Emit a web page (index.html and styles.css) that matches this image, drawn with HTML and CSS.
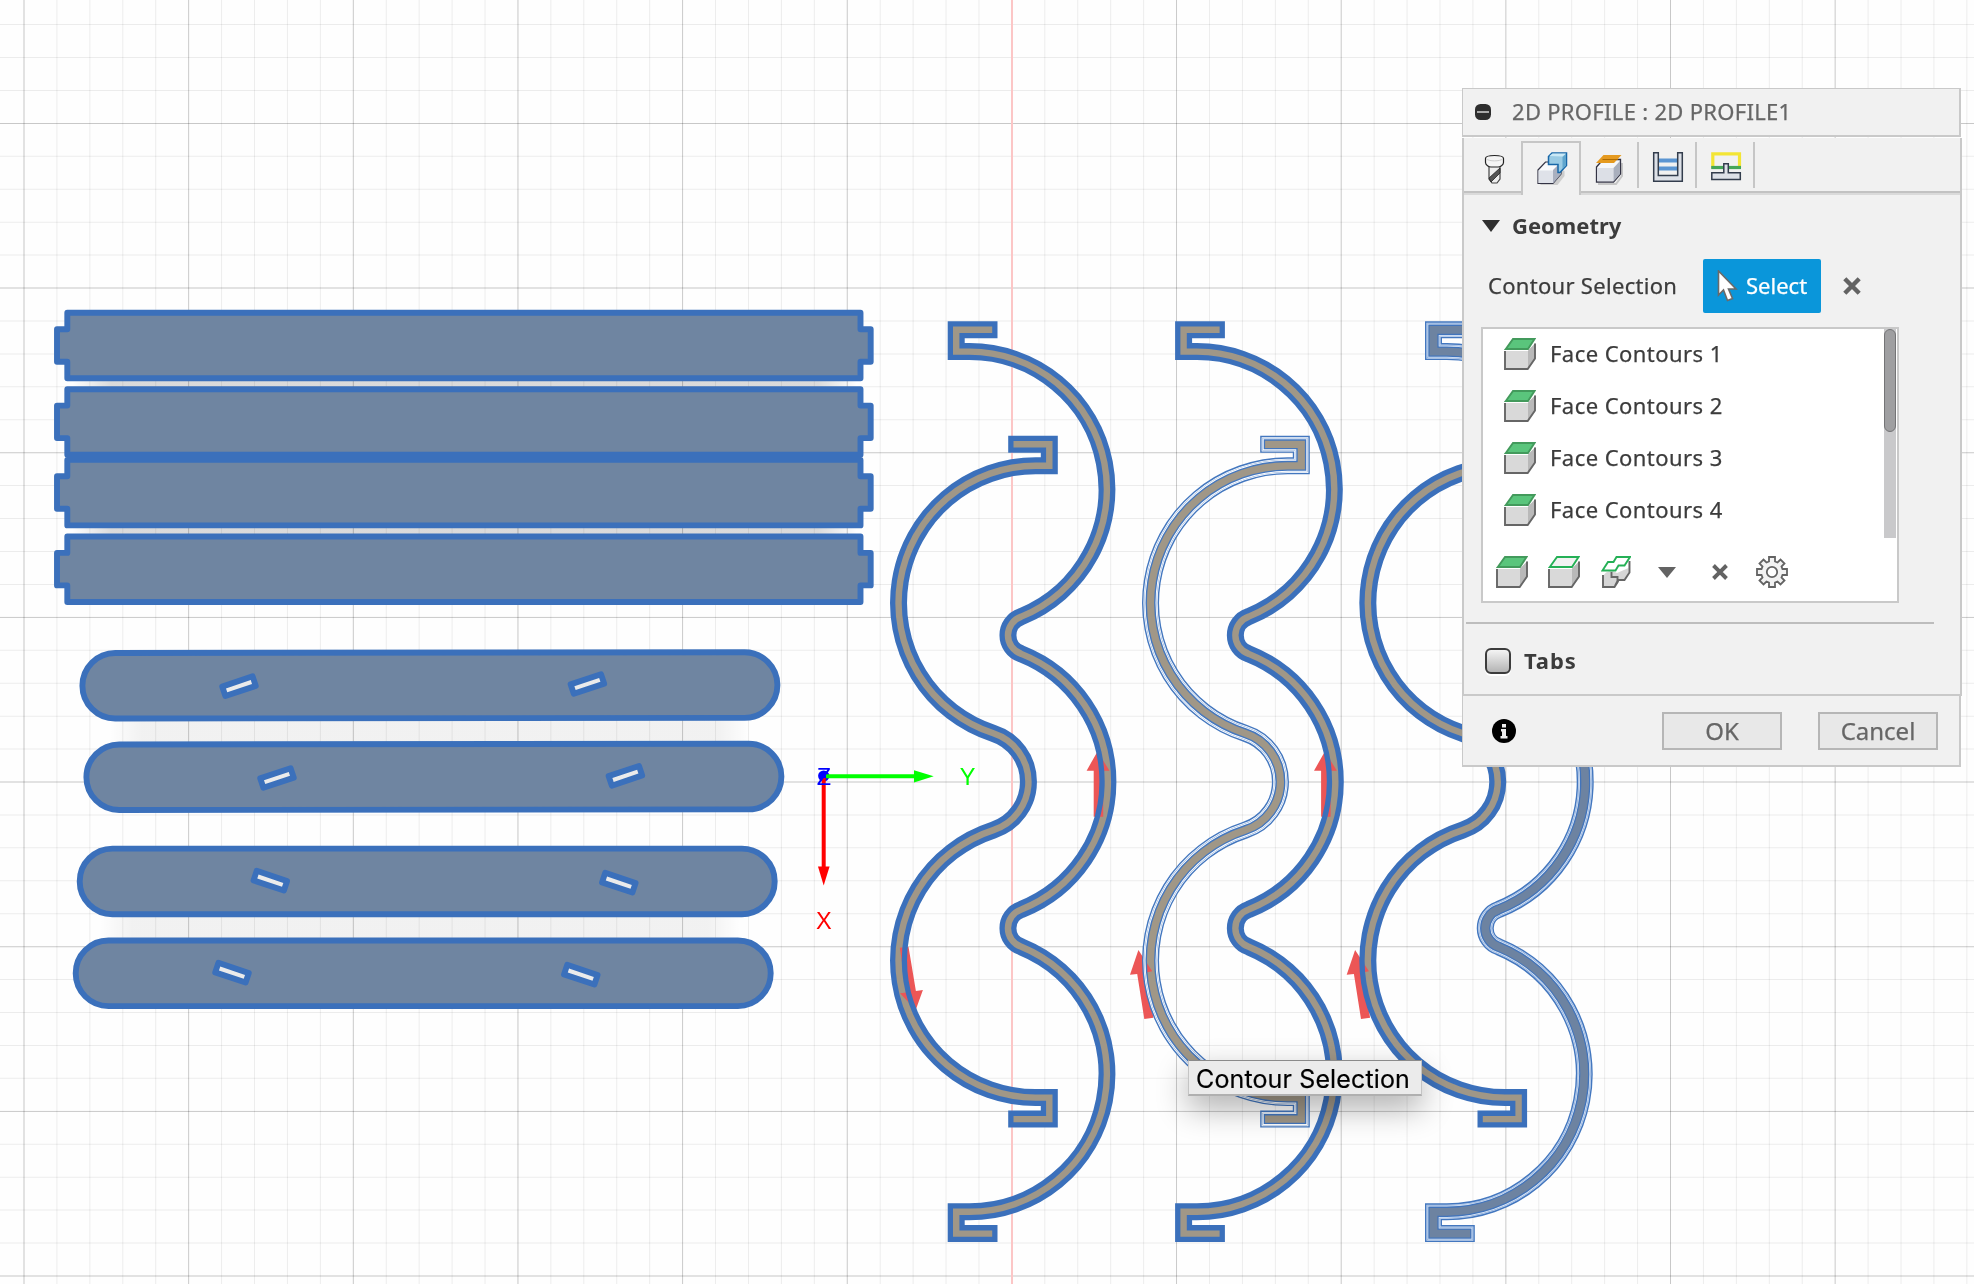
FILE: index.html
```html
<!DOCTYPE html>
<html lang="en">
<head>
<meta charset="utf-8">
<title>2D Profile</title>
<link rel="stylesheet" href="styles.css">
</head>
<body>
<main class="viewport">
<svg class="canvas" width="1974" height="1284" viewBox="0 0 1974 1284">
  <defs>
    <path id="brace-r" d="M989 329.8H956.2V351.6H969.5A137.6 137.6 0 0 1 1021.3 616.6A19.7 19.7 0 0 0 1021.3 653.9A137.6 137.6 0 0 1 1021.3 909.5A19.7 19.7 0 0 0 1021.3 946.8A137.6 137.6 0 0 1 969.5 1211.8H956.2V1233.6H989"/>
    <path id="brace-l" d="M1016.7 444.3H1049.3V465.8H1036A137.1 137.1 0 0 0 993.3 733.3A50.9 50.9 0 0 1 993.3 830.1A137.1 137.1 0 0 0 1036 1097.6H1049.3V1119.1H1016.7"/>
    <path id="plank" d="M67.3 0H860.5V16.4H870.7V48.9H860.5V65.5H67.3V48.9H57V16.4H67.3Z"/>
    <rect id="slat" width="695" height="65.6" rx="32.8"/>
    <rect id="slot" x="-16" y="-5" width="32" height="10"/>
    <g id="arrow"><path d="M1097.5 751.5L1109.5 770.7H1103.2V816.7H1093.7V770.7H1086.6Z"/></g>
    <g id="arrow-l"><path d="M1138.4 950L1152.2 971.3L1146 972.5L1153.4 1017.7L1144.3 1019L1137.2 974L1130 974.7Z"/></g>
    <mask id="core" maskUnits="userSpaceOnUse" x="860" y="280" width="760" height="1004">
      <rect x="860" y="280" width="760" height="1004" fill="#fff"/>
      <g class="brace" stroke="#000" stroke-width="6.4">
        <use href="#brace-r"/><use href="#brace-r" x="227.4"/><use href="#brace-l"/><use href="#brace-l" x="469.3"/>
      </g>
    </mask>
    <mask id="core-thin" maskUnits="userSpaceOnUse" x="860" y="280" width="760" height="1004">
      <rect x="860" y="280" width="760" height="1004" fill="#fff"/>
      <use class="brace" href="#brace-l" x="252" stroke="#000" stroke-width="7.2"/>
    </mask>
    <linearGradient id="shade" x1="0" x2="1"><stop offset="0" stop-color="#000" stop-opacity="0"/><stop offset=".05" stop-color="#000"/><stop offset=".95" stop-color="#000"/><stop offset="1" stop-color="#000" stop-opacity="0"/></linearGradient>
  </defs>

  <g fill="none" stroke="#000">
    <path d="M23.5 642H1974" stroke-opacity=".07" stroke-width="1284" stroke-dasharray="1 31.93"/>
    <path d="M987 24.1V1284" stroke-opacity=".07" stroke-width="1974" stroke-dasharray="1 31.93"/>
    <path d="M23.5 642H1974" stroke-opacity=".15" stroke-width="1284" stroke-dasharray="1 163.65"/>
    <path d="M987 122.9V1284" stroke-opacity=".15" stroke-width="1974" stroke-dasharray="1 163.67"/>
  </g>
  <path d="M1012 0V1284" stroke="#fcc6c6" stroke-width="2"/>

  <g fill="url(#shade)">
    <rect x="72" y="376" width="785" height="14" opacity=".14"/>
    <rect x="72" y="523" width="785" height="14" opacity=".14"/>
    <rect x="110" y="715" width="640" height="30" opacity=".05"/>
    <rect x="100" y="912" width="640" height="30" opacity=".05"/>
  </g>

  <g class="part">
    <use href="#plank" y="312.8"/><use href="#plank" y="389.2"/><use href="#plank" y="459.9"/><use href="#plank" y="536.5"/>
    <use href="#slat" x="82.4" y="652.6" transform="rotate(-.06 430 685)"/>
    <use href="#slat" x="86.4" y="744.1" transform="rotate(-.06 430 777)"/>
    <use href="#slat" x="79.7" y="848.6"/>
    <use href="#slat" x="75.7" y="940.5"/>
  </g>
  <g class="slots">
    <use href="#slot" transform="translate(239 686.2) rotate(-18.5)"/>
    <use href="#slot" transform="translate(587.4 684) rotate(-18.5)"/>
    <use href="#slot" transform="translate(277 778) rotate(-18.5)"/>
    <use href="#slot" transform="translate(625.4 775.8) rotate(-18.5)"/>
    <use href="#slot" transform="translate(270.3 880.7) rotate(18.5)"/>
    <use href="#slot" transform="translate(618.8 882.7) rotate(18.5)"/>
    <use href="#slot" transform="translate(232 972.7) rotate(18.5)"/>
    <use href="#slot" transform="translate(580.8 974.7) rotate(18.5)"/>
  </g>

  <g class="brace" stroke="#a09787" stroke-width="9">
    <use href="#brace-r"/><use href="#brace-r" x="227.4"/><use href="#brace-l"/><use href="#brace-l" x="252"/><use href="#brace-l" x="469.3"/>
  </g>
  <g fill="#ec5656">
    <use href="#arrow"/><use href="#arrow" x="227.4"/>
    <path d="M899.8 947.7L908.5 946.7L915.9 990.9L922.9 990L915.7 1010L900 993.3L906.5 992.5Z"/>
    <use href="#arrow-l"/><use href="#arrow-l" x="216.7"/>
  </g>
  <g mask="url(#core)" class="brace" stroke="#3b70bb" stroke-width="17">
    <use href="#brace-r"/><use href="#brace-r" x="227.4"/><use href="#brace-l"/><use href="#brace-l" x="469.3"/>
  </g>
  <g mask="url(#core-thin)" class="brace">
    <use href="#brace-l" x="252" stroke="#4377bf" stroke-width="17"/>
    <use href="#brace-l" x="252" stroke="#fff" stroke-width="14.2"/>
    <use href="#brace-l" x="252" stroke="#8fb0de" stroke-width="12.7"/>
    <use href="#brace-l" x="252" stroke="#fff" stroke-width="11.7"/>
    <use href="#brace-l" x="252" stroke="#4377bf" stroke-width="10"/>
  </g>
  <g class="brace">
    <use href="#brace-r" x="477.3" stroke="#4377bf" stroke-width="17"/>
    <use href="#brace-r" x="477.3" stroke="#c9d9f0" stroke-width="14.2"/>
    <use href="#brace-r" x="477.3" stroke="#7fa4d8" stroke-width="12.8"/>
    <use href="#brace-r" x="477.3" stroke="#e4edf8" stroke-width="11.8"/>
    <use href="#brace-r" x="477.3" stroke="#4174bc" stroke-width="10.4"/>
    <use href="#brace-r" x="477.3" stroke="#6d83a1" stroke-width="7.8"/>
  </g>

  <g class="axes">
    <circle cx="823.7" cy="776" r="5.6" fill="#00f"/>
    <path d="M823.7 778V867" stroke="#f00" stroke-width="4"/><path d="M818 866.5H829.6L823.7 885.5Z" fill="#f00"/>
    <path d="M826 776.3H915" stroke="#0f0" stroke-width="4"/><path d="M914 770.3V782.5L933.7 776.3Z" fill="#0f0"/>
    <text x="967.7" y="784.5" fill="#0f0">Y</text>
    <text x="823.9" y="928.5" fill="#f00">X</text>
    <text x="823.9" y="784.5" fill="#00f">Z</text>
  </g>
</svg>

<div class="tooltip">Contour Selection</div>

<section class="dialog">
  <header class="titlebar">
    <svg width="16" height="16" viewBox="0 0 16 16"><rect width="16" height="16" rx="5.5" fill="#2e2e2e"/><path d="M2 8H14" stroke="#aaa" stroke-width="2"/></svg>
    <h1>2D PROFILE : 2D PROFILE1</h1>
  </header>
  <div class="body">
    <nav class="tabs">
      <span class="tab first"><svg width="57" height="50" viewBox="0 0 57 50">
        <path d="M25 24H36V38L33 42H28L25 38Z" fill="#eee" stroke="#444" stroke-width="1.2"/>
        <path d="M25 37L36 27V32L27 41Z" fill="#555" stroke="#222" stroke-width=".8"/>
        <path d="M21.500 17.500C21.500 13.500 39.500 13.500 39.500 17.500V21.500C39.500 24 36 26 34 26H27C25 26 21.500 24 21.500 21.500Z" fill="#f4f4f4" stroke="#222" stroke-width="1.2"/><path d="M22.500 18C25 20.500 36 20.500 38.500 18" fill="none" stroke="#ccc"/></svg></span>
      <span class="tab active"><svg width="56" height="50" viewBox="0 0 56 50">
        <path d="M16 42H33L40 33V28L24 20L16 28Z" fill="#aaa" opacity=".5" transform="translate(1.500 1)"/>
        <path d="M15 28L22.500 20H38V32L30 41.500H15Z" fill="#fafbfd" stroke="#334" stroke-width="1.2"/>
        <path d="M15.500 28.500H30V41H15.500Z" fill="#dfe2e9"/><path d="M30 28L38 20V32L30 41.500Z" fill="#aab0bf"/>
        <path d="M25.500 14.500L29 11H43.500V23.500L37 30.500H35V22.500H25.500Z" fill="#9acbe4" stroke="#1867a8" stroke-width="1.5"/>
        <path d="M26.500 14L29.500 11.500H43L39.500 14.500Z" fill="#cbe9f6"/><path d="M39.500 15V27L43 23.500V12Z" fill="#5fa5cd"/></svg></span>
      <span class="tab"><svg width="56" height="50" viewBox="0 0 56 50">
        <path d="M17 43H35L41 35V22" fill="none" stroke="#aaa" stroke-width="2" opacity=".6"/>
        <path d="M15.500 26L22 18.500H39.500V33L32.500 41H15.500Z" fill="#f6f7fa" stroke="#334" stroke-width="1.3"/>
        <path d="M16.200 27H32.500V40.300H16.200Z" fill="#dcdfe6"/><path d="M32.500 27L39 20V33L32.500 40.500Z" fill="#a9afbd"/>
        <path d="M15 22L22.500 14H40.500L33 22Z" fill="#e59a20"/><path d="M21.500 18.500H37" stroke="#b06c00" stroke-width="1"/></svg></span>
      <span class="tab"><svg width="56" height="50" viewBox="0 0 56 50">
        <path d="M19 17.500H38V21.500H19ZM19 25.500H38V29.500H19Z" fill="#5b95d2"/>
        <path d="M14.700 11.700H19.300V34.600H38.700V11.700H43.300V40.300H14.700Z" fill="#dde1e8" stroke="#333d4d" stroke-width="1.500"/></svg></span>
      <span class="tab"><svg width="56" height="50" viewBox="0 0 56 50">
        <path d="M15.800 27V12.800H42.500V27" fill="none" stroke="#f3e535" stroke-width="3.200"/><path d="M14.200 26.500H44" stroke="#45a659" stroke-width="3.200"/>
        <path d="M14.800 31.800H26.800V22.800H31.300V31.800H43.300V38.500H14.800Z" fill="#dde1e8" stroke="#333d4d" stroke-width="1.500"/></svg></span>
    </nav>

    <div class="group-head"><svg width="18" height="12" viewBox="0 0 18 12"><path d="M0 0H18L9 12Z" fill="#2f2f2f"/></svg><h2>Geometry</h2></div>

    <div class="field">
      <label>Contour Selection</label>
      <button class="select"><svg width="21" height="33" viewBox="0 0 21 33"><path d="M1.500 1V25L6.500 20L10.500 30.500L15.500 28.500L11.500 19H19Z" fill="#fff" stroke="#6a6a6a" stroke-width="1.600"/></svg><span>Select</span></button>
      <svg class="clear" width="18" height="18" viewBox="0 0 18 18"><path d="M1.800 1.800L16.200 16.200M16.200 1.800L1.800 16.200" stroke="#636363" stroke-width="4.400"/></svg>
    </div>

    <div class="listbox">
      <svg class="defs" width="0" height="0"><defs>
        <g id="cube"><path d="M1 13H24L31 6V21L24 31H1Z" fill="#d9d9d9"/><path d="M24 12.500L31.500 5V21L24 31Z" fill="#b9b9b9"/><path d="M1 13V31H23.700L31 20.500V5.500" fill="none" stroke="#666" stroke-width="1.900"/></g>
        <path id="lid" d="M1.800 11L9 1H30.500L24 11Z"/>
      </defs></svg>
      <div class="scroll">
        <ul>
          <li><svg width="32" height="32"><use href="#cube"/><use class="face" href="#lid"/></svg><span>Face Contours 1</span></li>
          <li><svg width="32" height="32"><use href="#cube"/><use class="face" href="#lid"/></svg><span>Face Contours 2</span></li>
          <li><svg width="32" height="32"><use href="#cube"/><use class="face" href="#lid"/></svg><span>Face Contours 3</span></li>
          <li><svg width="32" height="32"><use href="#cube"/><use class="face" href="#lid"/></svg><span>Face Contours 4</span></li>
        </ul>
        <div class="track"><div class="thumb"></div></div>
      </div>
      <div class="tools">
        <svg width="32" height="32"><use href="#cube"/><use class="face" href="#lid"/></svg>
        <svg width="32" height="32"><use href="#cube"/><use class="edge" href="#lid"/></svg>
        <svg class="chain" width="30" height="32" viewBox="0 0 30 32"><path d="M11 14.500L16 17L27.500 12V6L29 5V16L23 25H17V27L13 31H2V20L5 16.500Z" fill="#d6d6d6"/><path d="M2 19V31H13.500L17 25.500V24H23.500L28.500 16.500V5M10.500 16V21H16.500V25L14 30" fill="none" stroke="#666" stroke-width="1.900"/><path d="M1.500 14.500L7 6H12.500L15.500 1H29L23.500 9.500H17.500L14.500 14.500Z" fill="#fff" stroke="#25b056" stroke-width="1.900"/></svg>
        <svg class="drop" width="18" height="11" viewBox="0 0 18 11"><path d="M0 0H18L9 11Z" fill="#636363"/></svg>
        <svg class="del" width="16" height="16" viewBox="0 0 16 16"><path d="M1.500 1.500L14.500 14.500M14.500 1.500L1.500 14.500" stroke="#636363" stroke-width="3.900"/></svg>
        <svg class="gear" width="32" height="32" viewBox="0 0 32 32"><path d="M13 1H19V5.500L21.500 6.500L24.500 3.500L28.500 7.500L25.500 10.500L26.500 13H31V19H26.500L25.500 21.500L28.500 24.500L24.500 28.500L21.500 25.500L19 26.500V31H13V26.500L10.500 25.500L7.500 28.500L3.500 24.500L6.500 21.500L5.500 19H1V13H5.500L6.500 10.500L3.500 7.500L7.500 3.500L10.500 6.500L13 5.500Z" fill="#f2f2f2" stroke="#636363" stroke-width="1.800"/><circle cx="16" cy="16" r="5.200" fill="#fff" stroke="#636363" stroke-width="1.800"/></svg>
      </div>
    </div>

    <hr>
    <div class="check"><span class="box"></span><h2>Tabs</h2></div>
  </div>
  <footer class="footer">
    <svg width="24" height="24" viewBox="0 0 24 24"><circle cx="12" cy="12" r="12" fill="#000"/><path d="M10 5H14V8.500H10ZM9 10H14V17H15.500V19.500H8.500V17H10V12.500H9Z" fill="#eee"/></svg>
    <button>OK</button><button>Cancel</button>
  </footer>
</section>
</main>
</body>
</html>
```
FILE: styles.css
```css
* { box-sizing: border-box; }
body { margin: 0; background: #fff; font-family: "Noto Sans", "Open Sans", sans-serif; font-size: 22px; color: #3c3c3c; }
h1, h2, ul { margin: 0; padding: 0; }
svg { display: block; flex: none; }

.viewport { position: relative; width: 1974px; height: 1284px; overflow: hidden; background: #fefefe; }
.canvas { position: absolute; inset: 0; }
.brace { fill: none; stroke-linecap: square; stroke-linejoin: miter; }
.part { fill: #6f85a1; stroke: #3b70bb; stroke-width: 5.9; stroke-linejoin: round; }
.slots { fill: #ebebeb; stroke: #3b70bb; stroke-width: 5.9; stroke-linejoin: round; }
.axes text { font: 23.500px "Liberation Sans", Arial, sans-serif; text-anchor: middle; }

.tooltip {
  position: absolute; left: 1188px; top: 1060px; width: 234px; height: 36px; padding-left: 7px;
  border: 1px solid #c4c4c4; border-top-color: #8a8a8a; border-bottom: 2px solid #b0b0b0;
  background: #ebebeb; color: #000;
  font: 25px/37px Inter, Roboto, sans-serif; letter-spacing: .13px; white-space: nowrap;
  -webkit-text-stroke: .2px;
  box-shadow: 0 12px 32px rgba(0, 0, 0, .32);
}

.dialog { position: absolute; left: 1462px; top: 88px; width: 500px; -webkit-text-stroke: .25px; }
.titlebar {
  display: flex; align-items: center; gap: 21px; width: 499px; height: 49px; padding-left: 12px;
  background: #f1f1f1; border: solid #c9c9c9; border-width: 1px 2px 2px 1px;
}
.titlebar h1 { margin-top: -2px; font-size: 22px; font-weight: 400; letter-spacing: .3px; color: #666; }
.body { height: 558px; margin-top: 1px; background: #f1f1f1; border: solid #c9c9c9; border-width: 0 2px 2px; }

.tabs { display: flex; align-items: flex-end; height: 57px; padding-top: 3px; box-shadow: inset 0 -2px #dadada, inset 0 -4px #c2c2c2; }
.tab { width: 58px; height: 54px; position: relative; }
.tab::after { content: ""; position: absolute; right: 0; top: 1px; width: 2px; height: 46px; background: #c6c6c6; }
.tab.first { width: 57px; }
.tab.first::after, .tab.active::after { display: none; }
.tab.active { width: 60px; background: #f1f1f1; border: 2px solid #c6c6c6; border-bottom: 0; }
.tab.active svg { margin-top: -1px; }

.group-head { display: flex; align-items: center; gap: 12px; height: 62px; padding-left: 18px; }
h2 { margin-top: -2px; font-size: 22px; font-weight: 700; -webkit-text-stroke: 0; }
.field { display: flex; align-items: center; height: 54px; margin-top: 2px; padding-left: 24px; }
.field label { width: 215px; margin-top: -2px; letter-spacing: .3px; }
button { font: inherit; border: 0; padding: 0; }
.select { display: flex; align-items: center; gap: 8px; width: 118px; height: 54px; padding-left: 14px; border-radius: 2px; background: #0a96da; color: #fff; }
.select span { margin-top: -2px; }
.clear { margin-left: 22px; }

.listbox { width: 418px; height: 276px; margin: 14px 0 0 17px; background: #fff; border: 2px solid #c9c9c9; }
.defs { position: absolute; }
.scroll { display: flex; justify-content: space-between; height: 210px; padding-right: 1px; }
ul { list-style: none; }
li { display: flex; align-items: center; gap: 14px; height: 52px; padding-left: 21px; letter-spacing: .45px; }
li svg { margin-top: -2px; }
li span { margin-top: -4px; }
.face { fill: #5ac57c; stroke: #439a5c; stroke-width: 1.900px; }
.edge { fill: #f2f2f2; stroke: #25b056; stroke-width: 1.900px; }
.track { width: 12px; height: 209px; background: #c9c9cb; }
.thumb { height: 103px; border-radius: 6px; background: #9f9fa1; border: 1px solid #747476; }
.tools { display: flex; align-items: center; height: 64px; padding: 2px 0 0 13px; }
.tools svg + svg { margin-left: 20px; }
.tools .chain { margin-left: 21px; }
.tools .drop { margin-left: 27px; }
.tools .del { margin-left: 36px; }
.tools .gear { margin-left: 28px; }

hr { width: 468px; height: 2px; margin: 19px 0 0 2px; border: 0; background: #bdbdbd; }
.check { display: flex; align-items: center; gap: 13px; height: 74px; padding-left: 21px; }
.check h2 { letter-spacing: .9px; }
.box { width: 26px; height: 26px; border: 2px solid #3c3c3c; border-radius: 6px; background: linear-gradient(#f4f4f4, #b4b4b4); box-shadow: 0 2px #fff; }
.footer { display: flex; align-items: center; width: 499px; height: 71px; padding-left: 29px; background: #f1f1f1; border: solid #c9c9c9; border-width: 0 2px 2px 1px; }
.footer button { width: 120px; height: 38px; border: 2px solid #b6b6b6; background: #e8e8e8; color: #666; font-size: 24px; line-height: 31px; }
.footer svg { margin-right: 146px; }
.footer button + button { margin-left: 36px; }
```
